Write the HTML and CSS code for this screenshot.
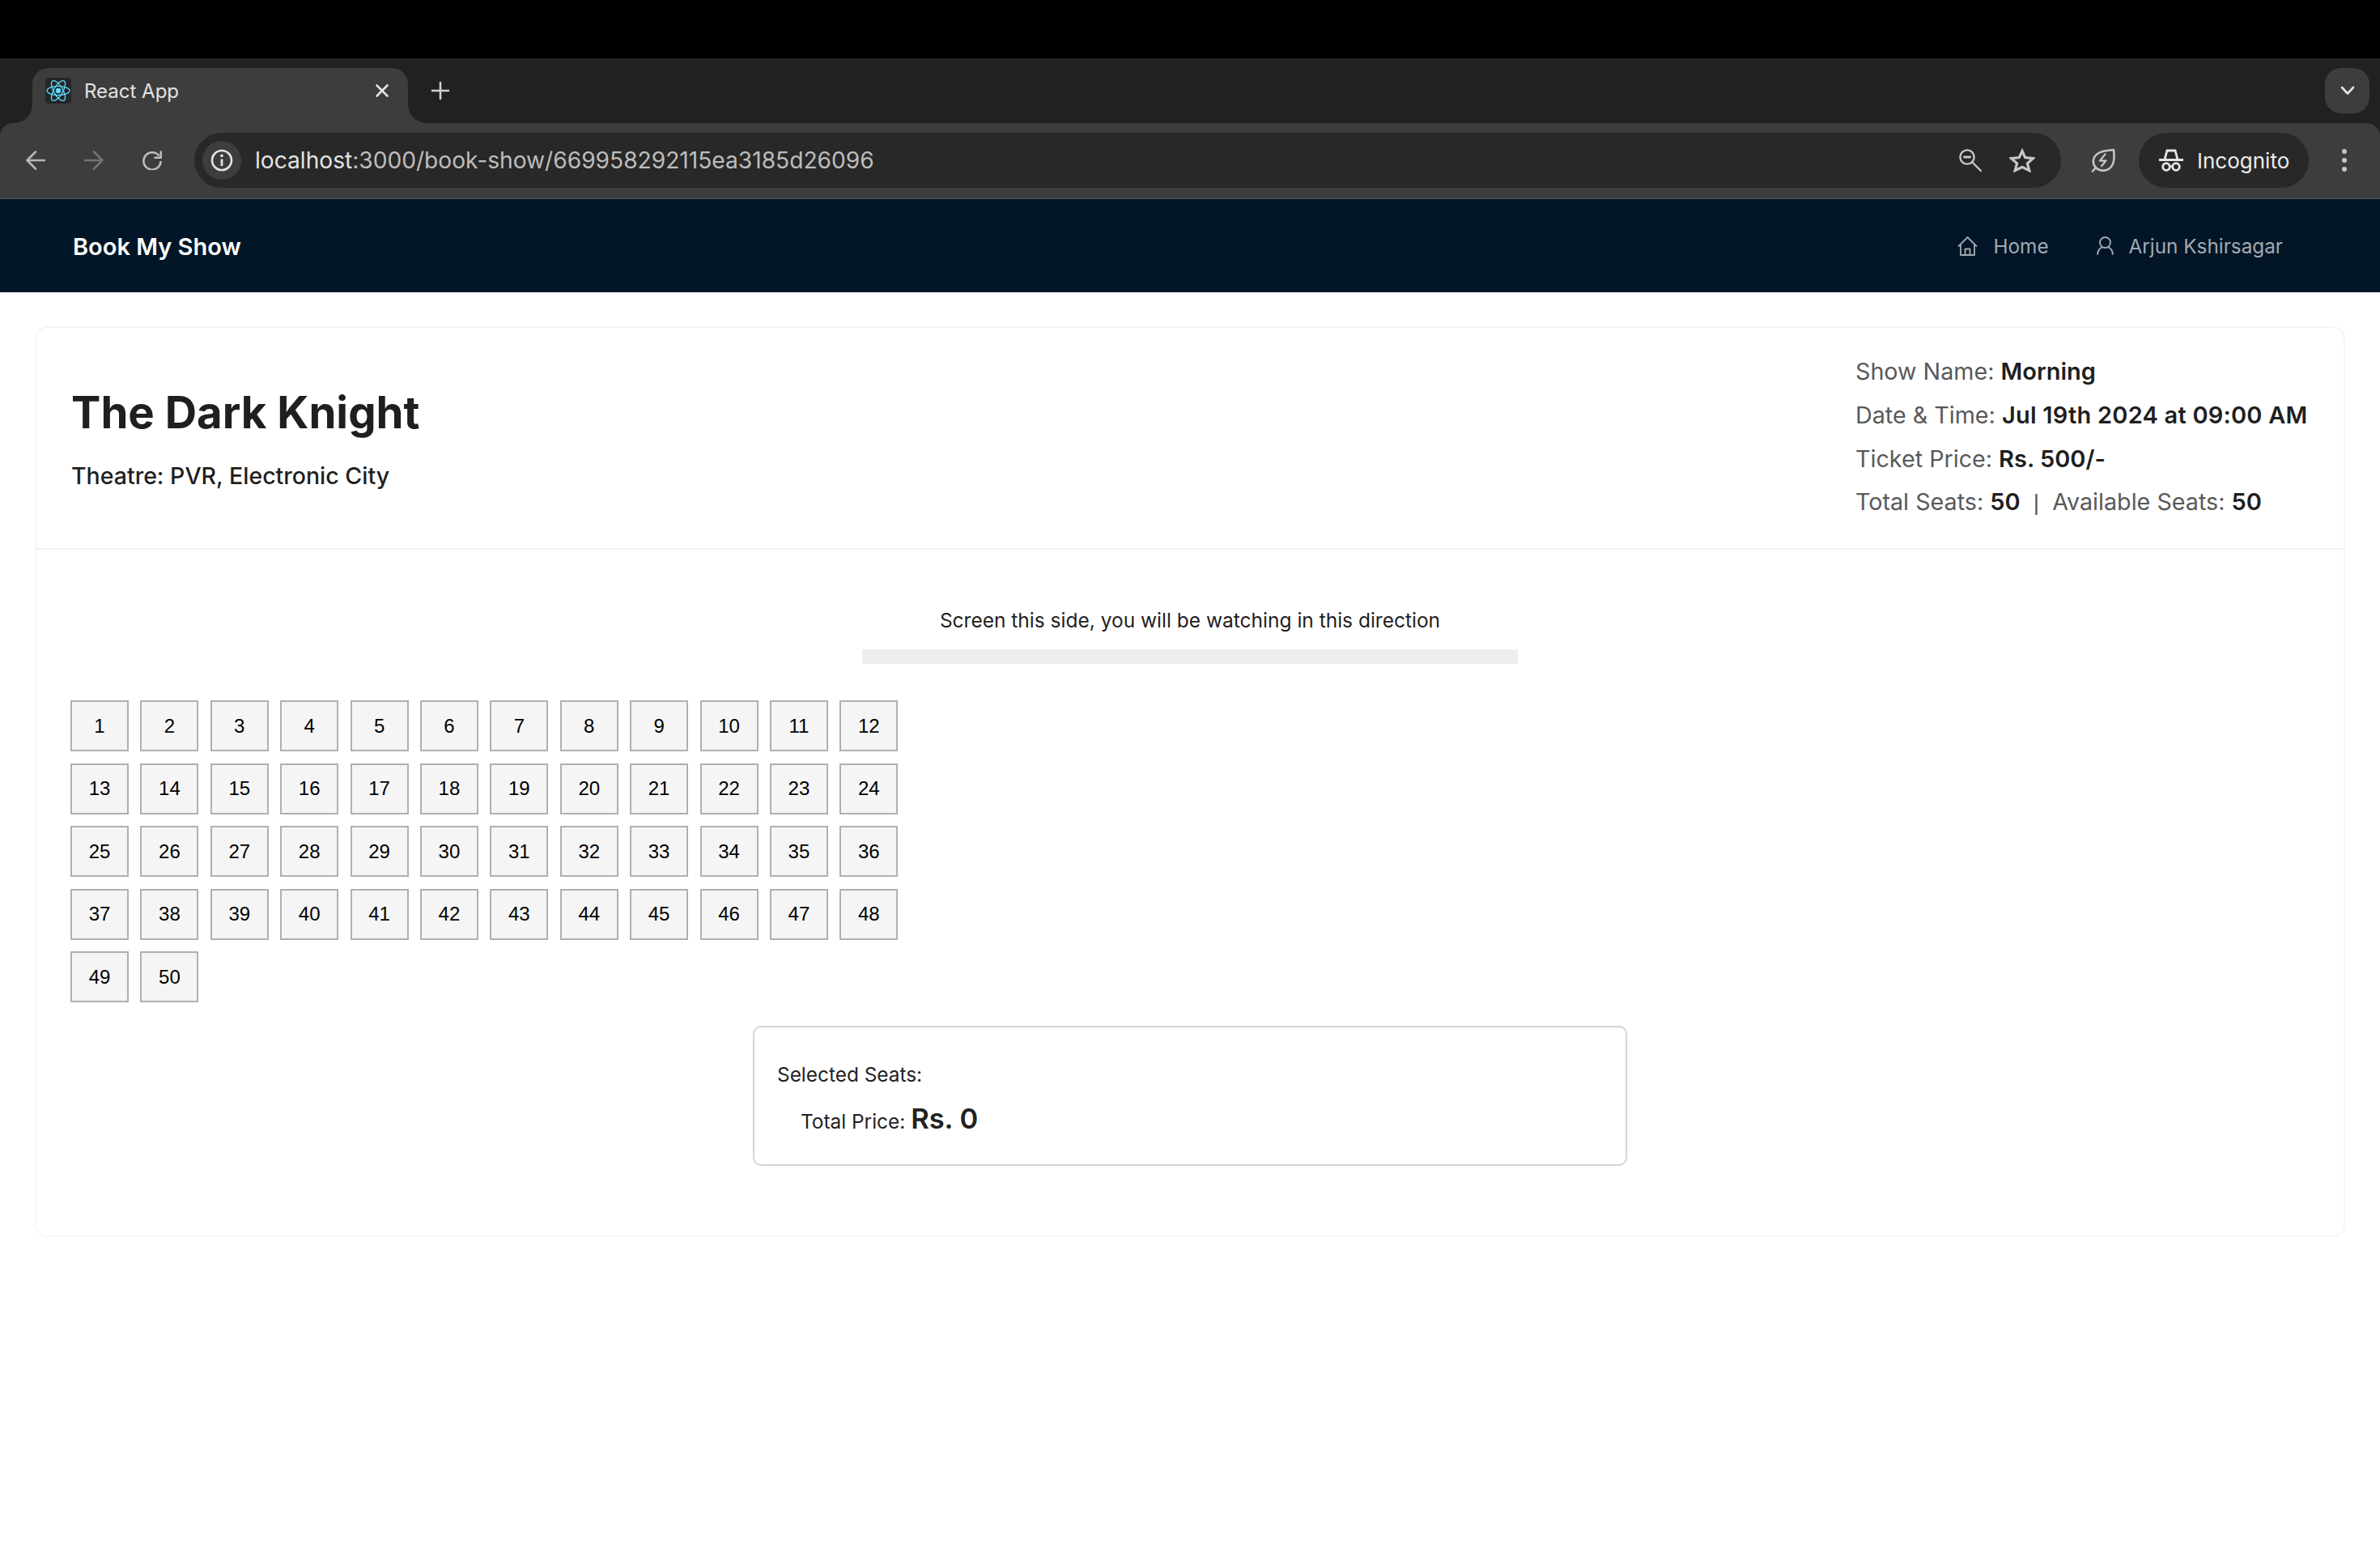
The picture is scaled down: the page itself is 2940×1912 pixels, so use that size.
FILE: index.html
```html
<!DOCTYPE html>
<html lang="en">
<head>
    <meta charset="UTF-8">
    <title>React App</title>
    <link rel="stylesheet" href="styles.css">
</head>
<body>
    <div class="top-black"></div>

    <div class="browser">
        <div class="tab-strip">
            <div class="tab">
                <span class="favicon">
                    <svg width="32" height="32" viewBox="0 0 32 32" fill="none" stroke="#61dafb" stroke-width="1.3">
                        <ellipse cx="16" cy="16" rx="14" ry="5.6"/>
                        <ellipse cx="16" cy="16" rx="14" ry="5.6" transform="rotate(60 16 16)"/>
                        <ellipse cx="16" cy="16" rx="14" ry="5.6" transform="rotate(120 16 16)"/>
                        <circle cx="16" cy="16" r="3.2" fill="#61dafb" stroke="none"/>
                    </svg>
                </span>
                <span class="tab-title">React App</span>
                <svg class="tab-close" width="18" height="18" viewBox="0 0 18 18" stroke="#e3e3e3" stroke-width="2.6" stroke-linecap="round">
                    <path d="M2.5 2.5 L15.5 15.5 M15.5 2.5 L2.5 15.5"/>
                </svg>
            </div>
            <svg class="new-tab" width="24" height="24" viewBox="0 0 24 24" stroke="#d0d0d0" stroke-width="2.6" stroke-linecap="round">
                <path d="M12 2 V22 M2 12 H22"/>
            </svg>
            <div class="tab-search">
                <svg width="18" height="12" viewBox="0 0 18 12" fill="none" stroke="#e6e6e6" stroke-width="2.6" stroke-linecap="round" stroke-linejoin="round">
                    <path d="M2 2 L9 9.5 L16 2"/>
                </svg>
            </div>
        </div>

        <div class="toolbar">
            <div class="nav-btns">
                <svg width="24" height="24" viewBox="0 0 24 24" fill="none" stroke="#b8b8b8" stroke-width="2.5" stroke-linecap="round" stroke-linejoin="round">
                    <path d="M23 12 H2 M12 1.5 L1.5 12 L12 22.5"/>
                </svg>
                <svg width="24" height="24" viewBox="0 0 24 24" fill="none" stroke="#757575" stroke-width="2.5" stroke-linecap="round" stroke-linejoin="round">
                    <path d="M1 12 H22 M12 1.5 L22.5 12 L12 22.5"/>
                </svg>
                <svg width="24" height="24" viewBox="0 0 24 24" fill="none" stroke="#bdbdbd" stroke-width="2.6">
                    <path d="M20.5 6.5 A10.6 10.6 0 1 0 22.6 13"/>
                    <path d="M22.7 0.5 V8.7 H14.5" stroke-linejoin="miter"/>
                </svg>
            </div>
            <div class="omnibox">
                <span class="site-info">
                    <svg width="28" height="28" viewBox="0 0 28 28" fill="none" stroke="#e3e3e3" stroke-width="2.6">
                        <circle cx="14" cy="14" r="12"/>
                        <path d="M14 12.5 V21" stroke-width="2.8"/>
                        <circle cx="14" cy="8.4" r="1.8" fill="#e3e3e3" stroke="none"/>
                    </svg>
                </span>
                <span class="url">localhost<span class="url-rest">:3000/book-show/669958292115ea3185d26096</span></span>
                <svg class="omni-icon" width="28" height="28" viewBox="0 0 28 28" fill="none" stroke="#c7c7c7" stroke-width="2.4" stroke-linecap="round">
                    <circle cx="10" cy="10" r="8.6"/>
                    <path d="M16.5 16.5 L27 27"/>
                    <path d="M6.4 10 H13.6" stroke-width="2.8"/>
                </svg>
                <svg class="omni-icon" width="32" height="30" viewBox="0 0 32 30" fill="none" stroke="#c7c7c7" stroke-width="3.2" stroke-linejoin="miter">
                    <path d="M16 3.5 L19.7 11.6 L29.5 12.6 L22.4 18.8 L24.8 27.6 L16 23.2 L7.2 27.6 L9.6 18.8 L2.5 12.6 L12.3 11.6 Z"/>
                </svg>
            </div>
            <svg class="leaf" width="30" height="30" viewBox="0 0 30 30" fill="none" stroke="#c4c4c4" stroke-width="2.6" stroke-linejoin="round" stroke-linecap="round">
                <path d="M28 2 C29 10 29 18 25 23 C20 29 11 29 6 24 C1 19 2 11 8 7 C13 3 21 3 28 2 Z"/>
                <path d="M2 28.5 L6 24"/>
                <path d="M17.5 7.5 L11 15.5 H18.5 L13 22" stroke-width="2.3"/>
            </svg>
            <div class="incognito">
                <svg width="30" height="28" viewBox="0 0 30 28" fill="none" stroke="#e6e6e6" stroke-width="2.8">
                    <path d="M7 13 L10 2 H20 L23 13"/>
                    <path d="M0 13.5 H30" stroke-width="3"/>
                    <circle cx="9" cy="22" r="4.3"/>
                    <circle cx="21" cy="22" r="4.3"/>
                    <path d="M13 21.5 H17" stroke-width="2.2"/>
                </svg>
                <span>Incognito</span>
            </div>
            <div class="menu-dots"><i></i><i></i><i></i></div>
        </div>
    </div>

    <nav class="navbar">
        <div class="brand">Book My Show</div>
        <div class="nav-links">
            <a class="nav-link">
                <svg width="25" height="24" viewBox="0 0 25 24" fill="none" stroke="#a0aab4" stroke-width="1.8" stroke-linejoin="round">
                    <path d="M1 12.5 L12.5 1 L24 12.5"/>
                    <path d="M4 10 V23 H21 V10"/>
                    <path d="M9.5 23 V15.5 H15.5 V23"/>
                </svg>
                <span>Home</span>
            </a>
            <a class="nav-link">
                <svg width="21" height="23" viewBox="0 0 21 23" fill="none" stroke="#a0aab4" stroke-width="1.9">
                    <circle cx="10.5" cy="7.5" r="6.5"/>
                    <path d="M1 22.5 C1.5 17 4.5 14 7.5 13.2 M20 22.5 C19.5 17 16.5 14 13.5 13.2"/>
                </svg>
                <span>Arjun Kshirsagar</span>
            </a>
        </div>
    </nav>

    <main class="card">
        <header class="card-head">
            <div class="movie">
                <h1>The Dark Knight</h1>
                <p>Theatre: PVR, Electronic City</p>
            </div>
            <div class="show-info">
                <div>Show Name: <b>Morning</b></div>
                <div>Date &amp; Time: <b class="date">Jul 19th 2024 at 09:00 AM</b></div>
                <div>Ticket Price: <b>Rs. 500/-</b></div>
                <div>Total Seats: <b>50</b> &nbsp;<span class="sep">|</span>&nbsp; Available Seats: <b>50</b></div>
            </div>
        </header>
        <section class="card-body">
            <div class="screen-area">
                <p>Screen this side, you will be watching in this direction</p>
                <div class="screen-bar"></div>
            </div>
            <div class="seats">
                <button>1</button><button>2</button><button>3</button><button>4</button><button>5</button><button>6</button><button>7</button><button>8</button><button>9</button><button>10</button><button>11</button><button>12</button>
                <button>13</button><button>14</button><button>15</button><button>16</button><button>17</button><button>18</button><button>19</button><button>20</button><button>21</button><button>22</button><button>23</button><button>24</button>
                <button>25</button><button>26</button><button>27</button><button>28</button><button>29</button><button>30</button><button>31</button><button>32</button><button>33</button><button>34</button><button>35</button><button>36</button>
                <button>37</button><button>38</button><button>39</button><button>40</button><button>41</button><button>42</button><button>43</button><button>44</button><button>45</button><button>46</button><button>47</button><button>48</button>
                <button>49</button><button>50</button>
            </div>
            <div class="summary">
                <div class="selected">Selected Seats:</div>
                <div class="total">Total Price: <b>Rs. 0</b></div>
            </div>
        </section>
    </main>
</body>
</html>
```

FILE: styles.css
```css
* {
    box-sizing: border-box;
}

body {
    margin: 0;
    min-height: 100vh;
    background: #fff;
    font-family: Inter, "Noto Sans", sans-serif;
    color: #1f1f1f;
}

.top-black {
    height: 72px;
    background: #000;
}

/* browser chrome */
.browser {
    background: #202221;
}

.tab-strip {
    height: 80px;
    display: flex;
    align-items: flex-end;
    padding-left: 40px;
    padding-right: 13px;
}

.tab {
    position: relative;
    width: 464px;
    height: 68px;
    background: #3d3d3d;
    border-radius: 20px 20px 0 0;
    display: flex;
    align-items: center;
    padding: 0 23px 12px 16px;
}

.tab::before,
.tab::after {
    content: "";
    position: absolute;
    bottom: 0;
    width: 22px;
    height: 22px;
}

.tab::before {
    left: -22px;
    background: radial-gradient(circle at 0 0, transparent 21.5px, #3d3d3d 22px);
}

.tab::after {
    right: -22px;
    background: radial-gradient(circle at 100% 0, transparent 21.5px, #3d3d3d 22px);
}

.favicon {
    width: 32px;
    height: 32px;
    background: #23272a;
    border-radius: 4px;
    display: flex;
}

.tab-title {
    flex: 1;
    margin-left: 16px;
    font-size: 24px;
    color: #e3e3e3;
}

.new-tab {
    margin: 0 0 28px 28px;
}

.tab-search {
    margin-left: auto;
    margin-bottom: 12px;
    width: 55px;
    height: 56px;
    background: #3d3d3d;
    border-radius: 20px;
    display: flex;
    align-items: center;
    justify-content: center;
}

.toolbar {
    height: 94px;
    background: #3d3d3d;
    border-bottom: 2px solid #4a4a4a;
    border-radius: 16px 16px 0 0;
    display: flex;
    align-items: center;
    padding-left: 32px;
}

.nav-btns {
    width: 208px;
    display: flex;
    gap: 48px;
}

.omnibox {
    width: 2306px;
    height: 68px;
    background: #282828;
    border-radius: 34px;
    display: flex;
    align-items: center;
    padding: 0 32px 0 10px;
}

.site-info {
    width: 48px;
    height: 48px;
    border-radius: 50%;
    background: #3d3d3d;
    display: flex;
    align-items: center;
    justify-content: center;
}

.url {
    flex: 1;
    margin-left: 17px;
    font-size: 28.15px;
    color: #e3e3e3;
}

.url-rest {
    color: #bdbdbd;
}

.omni-icon + .omni-icon {
    margin-left: 34px;
}

.leaf {
    margin-left: 37px;
}

.incognito {
    margin-left: 29px;
    width: 210px;
    height: 68px;
    background: #282828;
    border-radius: 34px;
    display: flex;
    align-items: center;
    padding-left: 25px;
    gap: 17px;
    font-size: 26px;
    color: #ececec;
}

.menu-dots {
    margin-left: 41px;
    display: flex;
    flex-direction: column;
    gap: 4.7px;
}

.menu-dots i {
    width: 6px;
    height: 6px;
    border-radius: 50%;
    background: #c7c7c7;
}

/* page nav */
.navbar {
    height: 115px;
    background: #021627;
    display: flex;
    align-items: center;
    justify-content: space-between;
    padding: 0 120px 0 90px;
}

.brand {
    padding-top: 1px;
    font-size: 29px;
    font-weight: 600;
    color: #fff;
}

.nav-links {
    display: flex;
    gap: 59px;
}

.nav-link {
    display: flex;
    align-items: center;
    gap: 19px;
    font-size: 24.3px;
    color: #a0aab4;
}

/* card */
.card {
    margin: 42px 43px 0;
    height: 1125px;
    border: 2px solid #f5f5f5;
    border-radius: 16px;
}

.card-head {
    height: 274px;
    border-bottom: 2px solid #f2f2f2;
    display: flex;
    justify-content: space-between;
    align-items: center;
    padding: 0 43px 2px;
}

.movie {
    padding-top: 2px;
}

.movie h1 {
    margin: 0;
    font-size: 54.5px;
    line-height: 68px;
    font-weight: 650;
    color: #1f1f1f;
}

.movie p {
    margin: 25px 0 0;
    font-size: 28.5px;
    line-height: 40px;
    font-weight: 500;
}

.show-info {
    min-width: 560px;
    font-size: 28.7px;
    line-height: 53.7px;
    color: #595959;
}

.show-info b {
    font-size: 29px;
    font-weight: 600;
    color: #1f1f1f;
}

.show-info .date {
    letter-spacing: 0.22px;
}

.sep {
    font-family: "Liberation Sans", sans-serif;
    font-size: 28px;
}

.card-body {
    padding: 67px 42px 0;
}

.screen-area {
    display: flex;
    flex-direction: column;
    align-items: center;
}

.screen-area p {
    margin: 0 0 17px;
    font-size: 24.5px;
    line-height: 38px;
    padding-top: 1px;
}

.screen-bar {
    width: 810px;
    height: 18px;
    background: #eee;
}

.seats {
    margin-top: 45px;
    width: 1040px;
    display: flex;
    flex-wrap: wrap;
    gap: 14.5px 14.4px;
}

.seats button {
    width: 72px;
    height: 63px;
    padding: 0;
    background: #f5f5f5;
    border: 2px solid #b0b0b0;
    font-family: "Liberation Sans", sans-serif;
    font-size: 24px;
    color: #000;
}

.summary {
    margin: 29px auto 0;
    width: 1080px;
    height: 173px;
    border: 2px solid #d4d4d4;
    border-radius: 10px;
    padding: 40px 28px 0;
    font-size: 24.4px;
    color: #222;
}

.selected {
    line-height: 36px;
}

.total {
    margin-top: 16px;
    padding-left: 29px;
}

.total b {
    font-size: 34.5px;
    font-weight: 600;
}
```
